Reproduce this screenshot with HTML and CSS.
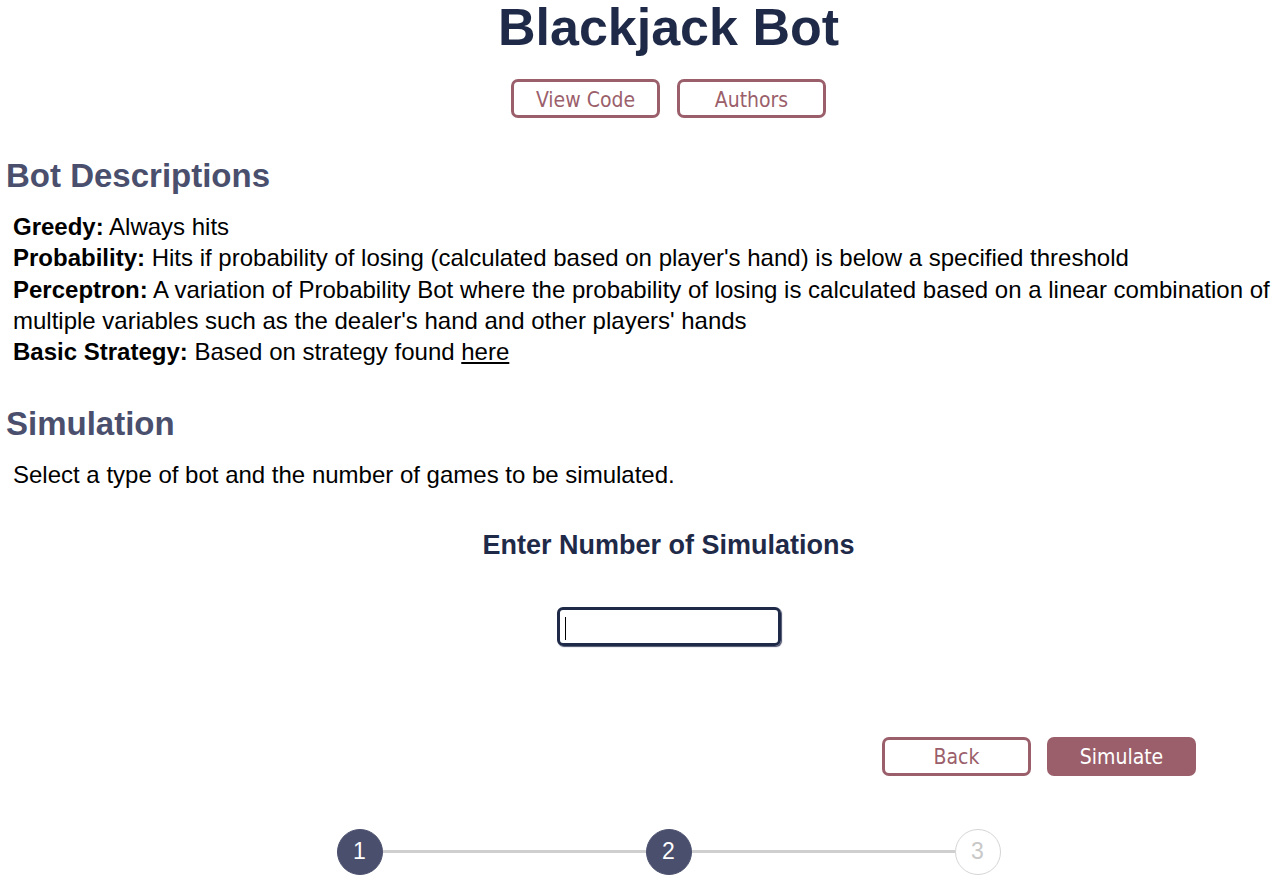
FILE: index.html
```html
<!DOCTYPE html>
<html>
<head>
<meta charset="utf-8">
<link rel="stylesheet" href="styles.css">
</head>
<body>
<div class="page">
<header class="top">
  <h1 class="title">Blackjack Bot</h1>
  <div class="top-buttons">
    <button class="btn btn-outline">View Code</button>
    <button class="btn btn-outline">Authors</button>
  </div>
</header>
<section class="section">
  <h2 class="section-title">Bot Descriptions</h2>
  <div class="desc">
    <p><b>Greedy:</b> Always hits</p>
    <p><b>Probability:</b> Hits if probability of losing (calculated based on player's hand) is below a specified threshold</p>
    <p><b>Perceptron:</b> A variation of Probability Bot where the probability of losing is calculated based on a linear combination of multiple variables such as the dealer's hand and other players' hands</p>
    <p><b>Basic Strategy:</b> Based on strategy found <a href="#" class="link">here</a></p>
  </div>
</section>
<section class="section">
  <h2 class="section-title sim-title">Simulation</h2>
  <div class="desc"><p>Select a type of bot and the number of games to be simulated.</p></div>
</section>
<div class="form">
  <h3 class="form-title">Enter Number of Simulations</h3>
  <div class="input-box"><span class="caret"></span></div>
</div>
<div class="actions">
  <button class="btn btn-outline">Back</button>
  <button class="btn btn-fill">Simulate</button>
</div>
<div class="stepper">
  <div class="step active">1</div>
  <div class="line"></div>
  <div class="step active">2</div>
  <div class="line"></div>
  <div class="step">3</div>
</div>
</div>
</body>
</html>
```
FILE: styles.css
```css
* { box-sizing: border-box; }
html, body { overflow: hidden; }
body {
  margin: 0;
  font-family: "Liberation Sans", Arial, sans-serif;
  color: #000;
  background: #fff;
}
.page { width: 1337px; }
.top { display: flex; flex-direction: column; align-items: center; }
.title {
  margin: 0;
  font-size: 52px;
  line-height: 54px;
  font-weight: bold;
  color: #1f2a48;
}
.top-buttons { display: flex; gap: 17px; margin-top: 25px; }
.btn {
  width: 149px;
  height: 39px;
  border-radius: 7px;
  font-family: "DejaVu Sans Condensed", "DejaVu Sans", sans-serif;
  font-size: 21px;
  padding: 2px 0 0;
  cursor: pointer;
}
.btn-outline { background: #fff; border: 3px solid #9b5f6b; color: #9b5f6b; }
.btn-fill { background: #9b5f6b; border: 3px solid #9b5f6b; color: #fff; }
.section { padding-left: 6px; }
.section-title {
  margin: 0;
  margin-top: 39px;
  font-size: 33px;
  line-height: 38px;
  font-weight: bold;
  color: #4a4f6d;
}
.sim-title { margin-top: 38px; }
.desc { padding-left: 7px; margin-top: 16px; width: 1300px; }
.desc p { margin: 0; font-size: 24px; line-height: 31.25px; }
.link { color: #000; text-decoration: underline; }
.form { display: flex; flex-direction: column; align-items: center; margin-top: 38px; }
.form-title {
  margin: 0;
  font-size: 27px;
  line-height: 32px;
  font-weight: bold;
  color: #1f2a48;
}
.input-box {
  margin-top: 46px;
  width: 224px;
  height: 39px;
  border: 3px solid #1f2a48;
  border-radius: 6px;
  box-shadow: 1px 1px 1px #4a4f6d;
  padding: 7px 5px;
}
.caret { display: block; width: 1px; height: 23px; background: #000; }
.actions { display: flex; justify-content: flex-end; gap: 16px; margin-top: 91px; padding-right: 141px; }
.stepper { display: flex; align-items: center; justify-content: center; margin-top: 53px; }
.step {
  width: 46px;
  height: 46px;
  border-radius: 50%;
  background: #fff;
  border: 1px solid #d5d5d5;
  color: #c8c8c8;
  font-size: 23px;
  display: flex;
  align-items: center;
  justify-content: center;
  flex: none;
}
.step.active { background: #4a4f6d; border-color: #4a4f6d; color: #fff; }
.line { width: 263px; height: 3px; background: #cfcfcf; }
```
